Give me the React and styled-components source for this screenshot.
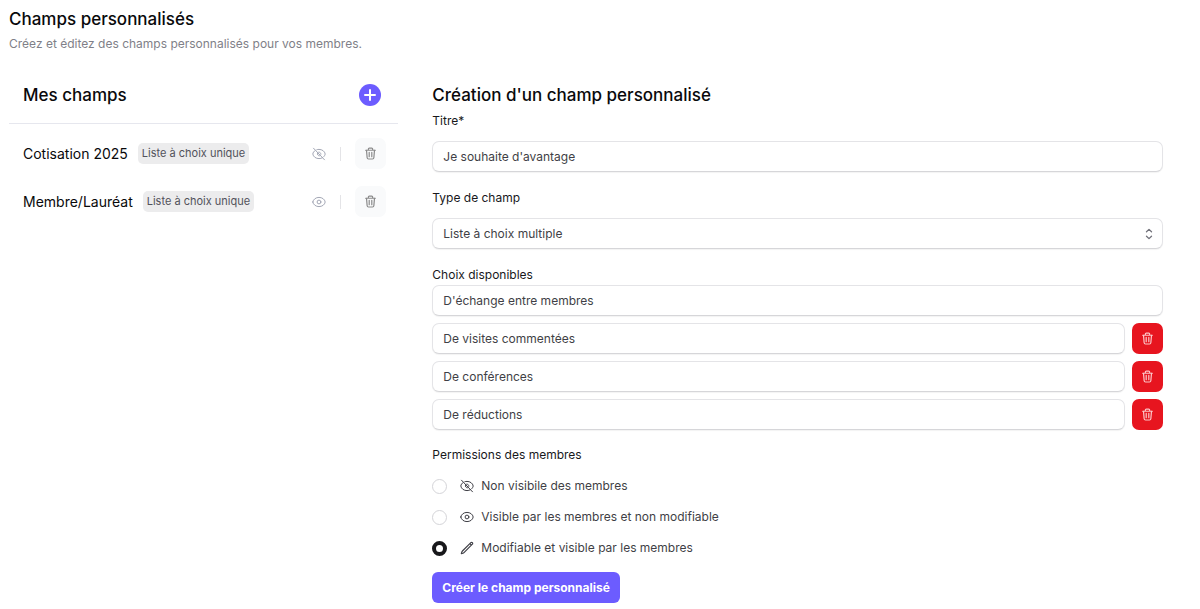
import React, { useState } from "react";
import styled, { createGlobalStyle, css } from "styled-components";
import { HiOutlinePencil } from "react-icons/hi2";

const EyeIcon = () => (
  <Icon viewBox="0 0 14 14" aria-hidden="true">
    <path d="M.8 7C1.200 4.300 3.900 2.400 7 2.400S12.800 4.300 13.200 7C12.800 9.700 10.100 11.600 7 11.600S1.200 9.700.8 7Z" />
    <circle cx="7" cy="7" r="1.900" />
  </Icon>
);

const EyeOffIcon = () => (
  <Icon viewBox="0 0 14 14" aria-hidden="true">
    <path d="M3 3.600C1.800 4.400 1 5.600.8 7c.4 2.700 3.100 4.600 6.200 4.600 1.300 0 2.500-.3 3.500-.9" />
    <path d="M4.800 2.700C5.500 2.500 6.200 2.400 7 2.400c3.100 0 5.800 1.900 6.200 4.600-.2 1.200-.8 2.100-1.700 2.900" />
    <path d="M5.500 5.900C5 7.500 6 8.900 7.400 8.900M6.700 5.100C8 5 8.900 6 8.900 7.300" />
    <path d="M1.500 1.200l11 11.600" />
  </Icon>
);

const TrashIcon = () => (
  <Icon viewBox="0 0 14 14" aria-hidden="true">
    <path d="M1.800 3.500h10.400M4.700 3.300V2.100c0-.6.4-1 1-1h2.600c.6 0 1 .4 1 1v1.200" />
    <path d="M2.700 3.600l.7 8c.1.800.6 1.300 1.400 1.300h4.400c.8 0 1.300-.5 1.400-1.300l.7-8" />
    <path d="M5.600 5.700v4.700M8.400 5.700v4.700" />
  </Icon>
);

const FIELDS = [
  { title: "Cotisation 2025", type: "Liste à choix unique", visible: false },
  { title: "Membre/Lauréat", type: "Liste à choix unique", visible: true }
];

const PERMISSIONS = [
  {
    value: "hidden",
    label: "Non visibile des membres",
    icon: <EyeOffIcon />
  },
  {
    value: "readonly",
    label: "Visible par les membres et non modifiable",
    icon: <EyeIcon />
  },
  {
    value: "editable",
    label: "Modifiable et visible par les membres",
    icon: <HiOutlinePencil size={14} strokeWidth={2} />
  }
];

const FieldList = () => (
  <Side>
    <SideHeader>
      <Heading>Mes champs</Heading>
      <AddButton type="button" aria-label="Ajouter un champ">
        <svg width="22" height="22" viewBox="0 0 22 22" aria-hidden="true">
          <circle cx="11" cy="11" r="11" fill="#6c5cff" />
          <path
            d="M11 6v10M6 11h10"
            stroke="#fff"
            strokeWidth="2"
            strokeLinecap="round"
          />
        </svg>
      </AddButton>
    </SideHeader>
    <List>
      {FIELDS.map(({ title, type, visible }) => (
        <Row key={title}>
          <RowTitle>{title}</RowTitle>
          <Badge>{type}</Badge>
          <RowActions>
            {visible ? <EyeIcon /> : <EyeOffIcon />}
            <Separator />
            <IconButton type="button" aria-label={`Supprimer ${title}`}>
              <TrashIcon />
            </IconButton>
          </RowActions>
        </Row>
      ))}
    </List>
  </Side>
);

const FieldForm = () => {
  const [title, setTitle] = useState("Je souhaite d'avantage");
  const [type, setType] = useState("multiple");
  const [permission, setPermission] = useState("editable");
  const [choices, setChoices] = useState([
    "D'échange entre membres",
    "De visites commentées",
    "De conférences",
    "De réductions"
  ]);

  const updateChoice = (index, value) => {
    setChoices(choices.map((choice, i) => (i === index ? value : choice)));
  };

  const removeChoice = index => {
    setChoices(choices.filter((choice, i) => i !== index));
  };

  return (
    <Form onSubmit={e => e.preventDefault()}>
      <Heading>Création d'un champ personnalisé</Heading>

      <Field>
        <Label htmlFor="title">Titre*</Label>
        <Input
          id="title"
          value={title}
          onChange={e => setTitle(e.target.value)}
        />
      </Field>

      <Field $spaced>
        <Label htmlFor="type">Type de champ</Label>
        <SelectBox>
          <Select
            id="type"
            value={type}
            onChange={e => setType(e.target.value)}
          >
            <option value="multiple">Liste à choix multiple</option>
            <option value="single">Liste à choix unique</option>
          </Select>
          <SelectArrows width="8" height="12" viewBox="0 0 8 12">
            <path d="M1.5 3.8 4 1.4l2.5 2.4M1.5 8.2 4 10.6l2.5-2.4" />
          </SelectArrows>
        </SelectBox>
      </Field>

      <Choices>
        <Legend>Choix disponibles</Legend>
        {choices.map((choice, index) => (
          <Choice key={index}>
            <Input
              aria-label={`Choix ${index + 1}`}
              value={choice}
              onChange={e => updateChoice(index, e.target.value)}
            />
            {index > 0 && (
              <IconButton
                $danger
                type="button"
                aria-label={`Supprimer le choix ${index + 1}`}
                onClick={() => removeChoice(index)}
              >
                <TrashIcon />
              </IconButton>
            )}
          </Choice>
        ))}
      </Choices>

      <Permissions>
        <Legend>Permissions des membres</Legend>
        {PERMISSIONS.map(({ value, label, icon }) => (
          <Option key={value}>
            <Radio
              type="radio"
              name="permission"
              value={value}
              checked={permission === value}
              onChange={() => setPermission(value)}
            />
            {icon}
            <span>{label}</span>
          </Option>
        ))}
      </Permissions>

      <Submit type="submit">Créer le champ personnalisé</Submit>
    </Form>
  );
};

const App = () => (
  <>
    <GlobalStyle />
    <Page>
      <PageHeader>
        <Title>Champs personnalisés</Title>
        <Subtitle>
          Créez et éditez des champs personnalisés pour vos membres.
        </Subtitle>
      </PageHeader>
      <Columns>
        <FieldList />
        <FieldForm />
      </Columns>
    </Page>
  </>
);

const GlobalStyle = createGlobalStyle`
  *,
  *::before,
  *::after {
    box-sizing: border-box;
  }
  body {
    margin: 0;
    background: #fff;
    color: #09090b;
    font-family: Inter, sans-serif;
    font-size: 12px;
    line-height: 20px;
  }
  button,
  input,
  select {
    font: inherit;
  }
`;

const Icon = styled.svg`
  flex: none;
  width: 14px;
  height: 14px;
  fill: none;
  stroke: currentColor;
  stroke-width: 1;
  stroke-linecap: round;
  stroke-linejoin: round;
`;

const Page = styled.main`
  padding: 8px 23px 6px 9px;
`;

const PageHeader = styled.header`
  margin-bottom: 30px;
`;

const Title = styled.h1`
  margin: 0;
  font-size: 17px;
  font-weight: 500;
  line-height: 22px;
`;

const Subtitle = styled.p`
  margin: 4px 0 0;
  color: #7f7f88;
`;

const Columns = styled.div`
  display: grid;
  grid-template-columns: 1fr 2fr;
  align-items: start;
`;

const Side = styled.section`
  min-width: 0;
`;

const SideHeader = styled.div`
  display: flex;
  align-items: center;
  justify-content: space-between;
  padding: 0 17px 17px 14px;
  border-bottom: 1px solid #e6e7ee;
`;

const Heading = styled.h2`
  margin: 0;
  font-size: 17px;
  font-weight: 500;
  line-height: 22px;
`;

const AddButton = styled.button`
  display: flex;
  padding: 0;
  border: 0;
  background: none;
  cursor: pointer;
`;

const List = styled.ul`
  display: grid;
  gap: 17px;
  margin: 0;
  padding: 14px 12px 0 14px;
  list-style: none;
`;

const Row = styled.li`
  display: flex;
  align-items: center;
  gap: 10px;
  line-height: 21px;
`;

const RowTitle = styled.span`
  font-size: 14px;
`;

const Badge = styled.span`
  padding: 0 4px;
  border-radius: 5px;
  background: #ececed;
  color: #52525b;
  font-size: 11px;
`;

const RowActions = styled.div`
  display: flex;
  align-items: center;
  gap: 14px;
  margin-left: auto;
  color: #a3a7b5;
`;

const Separator = styled.span`
  width: 1px;
  height: 14px;
  background: #e4e4e7;
`;

const IconButton = styled.button`
  display: flex;
  flex: none;
  align-items: center;
  justify-content: center;
  width: 31px;
  height: 31px;
  padding: 0;
  border: 0;
  border-radius: 7px;
  background: #f9fafb;
  color: #8b8b8b;
  cursor: pointer;

  ${Icon} {
    width: 13px;
    height: 13px;
    stroke-width: 1.3;
  }

  ${({ $danger }) =>
    $danger &&
    css`
      background: #e7151f;
      color: #fbc5c7;
    `}
`;

const Form = styled.form`
  min-width: 0;
  padding: 0 14px 0 34px;
`;

const Field = styled.div`
  display: grid;
  gap: 10px;
  margin-top: ${({ $spaced }) => ($spaced ? 16 : 5)}px;
`;

const Label = styled.label`
  color: #18181b;
`;

const control = css`
  width: 100%;
  height: 31px;
  padding: 0 10px;
  border: 1px solid #e4e4e7;
  border-bottom-color: #d6d6d9;
  border-radius: 7px;
  background: #fff;
  color: #3f3f46;
  box-shadow: 0 1px 1px rgba(0, 0, 0, 0.05);
  outline: none;
`;

const Input = styled.input`
  ${control}
  flex: 1;
  min-width: 0;
`;

const SelectBox = styled.div`
  position: relative;
`;

const Select = styled.select`
  ${control}
  display: block;
  appearance: none;
`;

const SelectArrows = styled.svg`
  position: absolute;
  top: 10px;
  right: 10px;
  fill: none;
  stroke: #71717a;
  stroke-width: 1.3;
  stroke-linecap: round;
  stroke-linejoin: round;
  pointer-events: none;
`;

const Group = styled.fieldset`
  display: grid;
  min-width: 0;
  margin: 16px 0 0;
  padding: 0;
  border: 0;
`;

const Legend = styled.legend`
  padding: 0;
  color: #18181b;
`;

const Choices = styled(Group)`
  gap: 7px;
`;

const Choice = styled.div`
  display: flex;
  gap: 7px;
`;

const Permissions = styled(Group)`
  gap: 11px;
  margin-top: 15px;

  ${Legend} {
    margin-bottom: 11px;
  }
`;

const Option = styled.label`
  display: flex;
  align-items: center;
  color: #3f3f46;
  cursor: pointer;

  svg {
    margin: 0 7px 0 13px;
  }
`;

const Radio = styled.input`
  appearance: none;
  flex: none;
  width: 15px;
  height: 15px;
  margin: 0;
  border: 1px solid #d4d4d8;
  border-radius: 50%;
  background: #fff;

  &:checked {
    border: 4px solid #18181b;
  }
`;

const Submit = styled.button`
  height: 31px;
  margin-top: 14px;
  padding: 0 10px;
  border: 0;
  border-radius: 6px;
  background: #6c5cff;
  color: #fff;
  font-weight: 700;
  cursor: pointer;
`;

export default App;
